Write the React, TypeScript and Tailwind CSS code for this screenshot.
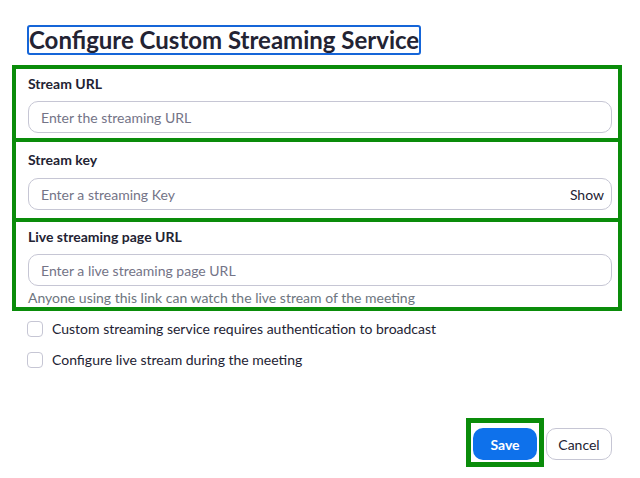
import React from "react";

const annotate = "border-4 border-[#0a8c0a]";
const inputCls =
  "block w-[584px] h-[32px] rounded-[10px] border border-[#c6c6d4] bg-white pl-[12px] pr-[7px] text-[14px] text-[#232333] placeholder:text-[#747487] outline-none";

const Field = ({
  label,
  placeholder,
  gap,
  extra,
}: {
  label: string;
  placeholder: string;
  gap: string;
  extra?: React.ReactNode;
}) => (
  <>
    <div className="h-[20px] text-[14px] font-bold leading-[20px] text-[#232333]">
      {label}
    </div>
    <div className={`relative ${gap}`}>
      <input type="text" placeholder={placeholder} className={inputCls} />
      {extra}
    </div>
  </>
);

const Check = ({ label, className }: { label: string; className?: string }) => (
  <label className={`flex h-[16px] items-center pl-[27px] ${className ?? ""}`}>
    <span className="h-[16px] w-[16px] rounded-[4px] border border-[#c6c6d4] bg-white" />
    <span className="ml-[9px] text-[14px] leading-[16px] text-[#232333]">{label}</span>
  </label>
);

export default function App() {
  return (
    <div className="h-[478px] w-[640px] bg-white pt-[25px] font-['Lato',sans-serif] text-[#232333]">
      <div className="pl-[27px]">
        <h1 className="inline-block h-[30px] rounded-[3px] border-2 border-[#1565d8] px-0 text-[24px] font-bold leading-[26px] text-[#232333]">
          Configure Custom Streaming Service
        </h1>
      </div>

      <div className="ml-[12px] mt-[10px] flex w-[610px] flex-col">
        {/* Stream URL */}
        <div className={`${annotate} h-[77px] pl-[12px] pt-[5px]`}>
          <Field label="Stream URL" placeholder="Enter the streaming URL" gap="mt-[7px]" />
        </div>

        {/* Stream key */}
        <div className={`${annotate} -mt-[4px] h-[84px] pl-[12px] pt-[8px]`}>
          <Field
            label="Stream key"
            placeholder="Enter a streaming Key"
            gap="mt-[8px]"
            extra={
              <span className="absolute right-[14px] top-0 flex h-[32px] items-center text-[14px] text-[#232333]">
                Show
              </span>
            }
          />
        </div>

        {/* Live streaming page URL */}
        <div className={`${annotate} -mt-[4px] h-[93px] pl-[12px] pt-[5px]`}>
          <Field
            label="Live streaming page URL"
            placeholder="Enter a live streaming page URL"
            gap="mt-[7px]"
          />
          <div className="mt-[3px] text-[14px] leading-[18px] text-[#6e7680]">
            Anyone using this link can watch the live stream of the meeting
          </div>
        </div>
      </div>

      <Check className="mt-[10px]" label="Custom streaming service requires authentication to broadcast" />
      <Check className="mt-[15px]" label="Configure live stream during the meeting" />

      <div className="mt-[50px] flex items-start justify-end pr-[28px]">
        <div className="border-[5px] border-[#0a8c0a] px-[2px] pb-[2px] pt-[5px]">
          <button className="h-[32px] w-[64px] rounded-[10px] bg-[#0e71eb] text-[14px] font-bold text-white">
            Save
          </button>
        </div>
        <button className="ml-[2px] mt-[10px] h-[32px] w-[66px] rounded-[10px] border border-[#c6c6d4] bg-white text-[14px] text-[#232333]">
          Cancel
        </button>
      </div>
    </div>
  );
}
